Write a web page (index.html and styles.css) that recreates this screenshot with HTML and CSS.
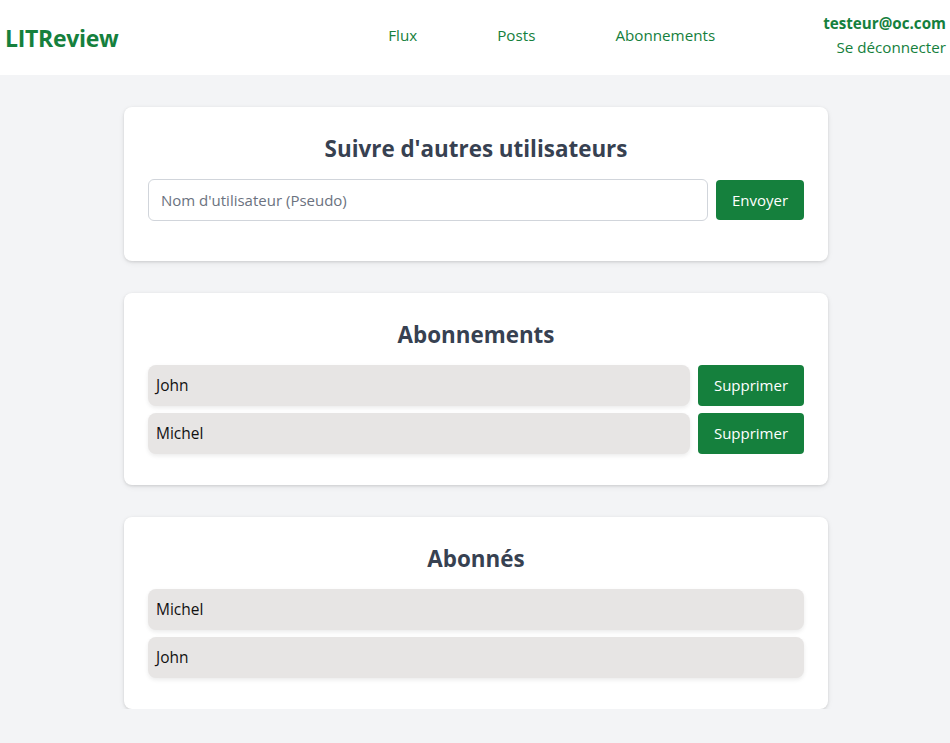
FILE: index.html
```html
<!DOCTYPE html>
<html lang="fr">
<head>
<meta charset="utf-8">
<title>LITReview - Abonnements</title>
<link rel="stylesheet" href="styles.css">
</head>
<body>
<header class="topbar">
  <div class="logo">LITReview</div>
  <nav class="nav">
    <a href="#">Flux</a>
    <a href="#">Posts</a>
    <a href="#">Abonnements</a>
  </nav>
  <div class="user">
    <div class="user-mail">testeur@oc.com</div>
    <a href="#" class="logout">Se déconnecter</a>
  </div>
</header>
<main class="main">
  <section class="card">
    <h2 class="card-title">Suivre d'autres utilisateurs</h2>
    <form class="follow-form">
      <input class="text-input" type="text" placeholder="Nom d'utilisateur (Pseudo)">
      <button class="btn btn-send" type="button">Envoyer</button>
    </form>
  </section>
  <section class="card">
    <h2 class="card-title">Abonnements</h2>
    <ul class="list">
      <li class="list-row"><span class="pill">John</span><button class="btn btn-del" type="button">Supprimer</button></li>
      <li class="list-row"><span class="pill">Michel</span><button class="btn btn-del" type="button">Supprimer</button></li>
    </ul>
  </section>
  <section class="card">
    <h2 class="card-title">Abonnés</h2>
    <ul class="list">
      <li class="list-row"><span class="pill">Michel</span></li>
      <li class="list-row"><span class="pill">John</span></li>
    </ul>
  </section>
</main>
</body>
</html>
```

FILE: styles.css
```css
* { box-sizing: border-box; }
html, body {
  margin: 0;
  padding: 0;
}
body {
  background: #f3f4f6;
  font-family: "Open Sans", "Noto Sans", "Liberation Sans", sans-serif;
  color: #111827;
}
.topbar {
  height: 75px;
  background: #ffffff;
  display: flex;
  align-items: center;
  padding: 0 4px 0 6px;
}
.logo {
  font-size: 23px;
  font-weight: 700;
  color: #15803d;
  letter-spacing: -0.3px;
  margin-left: -1px;
}
.nav {
  margin-left: auto;
  display: flex;
  gap: 80px;
  margin-top: -5px;
}
.nav a {
  color: #15803d;
  text-decoration: none;
  font-size: 15.2px;
}
.user {
  margin-left: 108px;
  text-align: right;
  display: flex;
  flex-direction: column;
  align-items: flex-end;
  gap: 2px;
  margin-top: -6px;
}
.user-mail {
  font-weight: 700;
  color: #15803d;
  font-size: 15.2px;
  line-height: 22px;
}
.logout {
  color: #15803d;
  text-decoration: none;
  font-size: 15.2px;
  line-height: 22px;
}
.main {
  width: 704px;
  margin: 32px 0 0 calc(50% - 351px);
  display: flex;
  flex-direction: column;
  gap: 32px;
}
.card {
  background: #ffffff;
  border-radius: 8px;
  box-shadow: 0 1px 3px rgba(0,0,0,0.12), 0 2px 6px rgba(0,0,0,0.06);
  padding: 24px 24px 24px;
}
.card-title {
  margin: 0 0 16px;
  padding-top: 3px;
  text-align: center;
  font-size: 22.4px;
  line-height: 29px;
  font-weight: 700;
  color: #374151;
}
.follow-form {
  display: flex;
  align-items: center;
  gap: 8px;
  margin: 0 0 16px;
}
.text-input {
  flex: 1;
  height: 42px;
  border: 1px solid #d1d5db;
  border-radius: 6px;
  padding: 0 12px;
  font-family: inherit;
  font-size: 15px;
  color: #111827;
  outline: none;
}
.text-input::placeholder { color: #6b7280; }
.btn {
  background: #15803d;
  color: #ffffff;
  border: none;
  border-radius: 4px;
  font-family: inherit;
  font-size: 15px;
  height: 40px;
  padding: 0 16px;
  cursor: pointer;
}
.btn-send { width: 88px; padding: 0; }
.btn-del { width: 106px; padding: 0 0 1px; height: 41px; }
.list {
  list-style: none;
  margin: 0;
  padding: 0;
  display: flex;
  flex-direction: column;
  gap: 7px;
}
.list-row {
  display: flex;
  gap: 8px;
}
.list-row:last-child { margin-bottom: 7px; }
.pill {
  flex: 1;
  height: 41px;
  display: flex;
  align-items: center;
  padding: 0 8px 2px;
  background: #e7e5e4;
  border-radius: 8px;
  box-shadow: 0 2px 4px rgba(0,0,0,0.08);
  font-size: 15.5px;
  color: #111111;
}
```
